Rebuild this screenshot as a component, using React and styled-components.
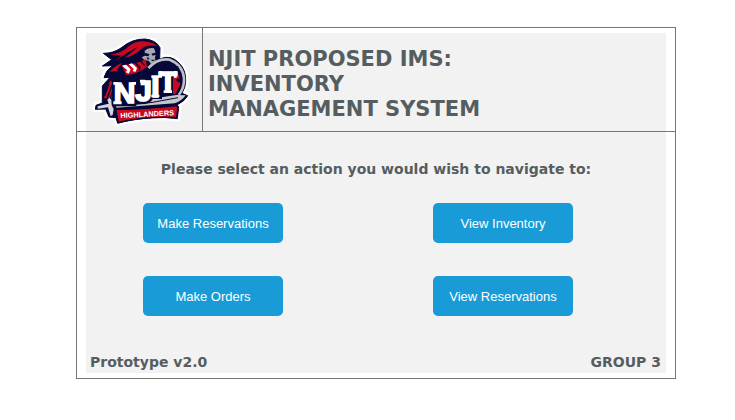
import React from "react";
import styled, { createGlobalStyle } from "styled-components";

const GlobalStyle = createGlobalStyle`
  *, *::before, *::after { box-sizing: border-box; }
  body {
    margin: 0;
    background: #fff;
    color: #555d61;
    font-family: Verdana, "DejaVu Sans", sans-serif;
  }
`;

const Page = styled.main`
  padding: 27px 59px 41px 76px;
`;

const Frame = styled.div`
  border: 1px solid #767676;
`;

const Header = styled.header`
  display: flex;
  border-bottom: 1px solid #767676;
`;

const LogoCell = styled.div`
  flex: none;
  display: flex;
  width: 126px;
  padding: 5px 0 0 9px;
  border-right: 1px solid #767676;
  background: #f2f2f2 content-box;
`;

const Logo = styled.svg`
  display: block;
  width: 100px;
  height: 90px;
  margin: 5px 6px 3px;
`;

const TitleCell = styled.div`
  flex: 1;
  display: flex;
  padding: 5px 9px 0 0;
  background: #f2f2f2 content-box;
`;

const Title = styled.h1`
  align-self: center;
  max-width: 290px;
  margin: 0;
  padding: 4px 0 0 5px;
  font-size: 21px;
  line-height: 25px;
  font-weight: 700;
`;

const Body = styled.section`
  padding: 0 9px 5px;
  background: #f2f2f2 content-box;
`;

const Prompt = styled.p`
  margin: 0;
  padding: 28px 0 25px;
  font-size: 14px;
  line-height: 18px;
  font-weight: 700;
  text-align: center;
`;

const Actions = styled.nav`
  display: grid;
  grid-template-columns: repeat(2, 140px);
  justify-content: space-between;
  row-gap: 33px;
  padding: 0 93px 0 57px;
`;

const ActionButton = styled.button`
  height: 40px;
  padding: 0;
  border: 0;
  border-radius: 5px;
  background: #189bd7;
  color: #fff;
  font-family: "Liberation Sans", Arial, sans-serif;
  font-size: 13px;
  cursor: pointer;
`;

const Footer = styled.footer`
  display: flex;
  justify-content: space-between;
  padding: 37px 5px 2px 4px;
  font-size: 14px;
  line-height: 18px;
  font-weight: 700;
`;

const LogoLetters = styled.text`
  font-family: "Liberation Sans", Arial, sans-serif;
  font-size: 90px;
  font-weight: 700;
  fill: #fff;
  stroke: #fff;
  stroke-width: 5px;
`;

const BannerText = styled.text`
  font-family: "Liberation Sans", Arial, sans-serif;
  font-size: 22px;
  font-weight: 700;
  fill: #fff;
`;

const silhouette =
  "M82 82 Q112 82 135 66 Q168 38 207 39 Q240 42 252 65 L251 99 Q284 84 309 111 Q330 131 329 164 Q329 184 318 202 L335 209 Q328 224 303 237 L308 242 L304 278 Q265 272 230 275 Q170 279 125 292 L120 275 L99 273 L89 249 L58 250 L60 238 L79 231 L79 180 L102 154 L84 155 Q88 134 110 119 L79 120 L107 101 Z";

const letters = [
  ["N", 113, 232],
  ["J", 178, 225],
  ["I", 226, 212],
  ["T", 248, 199],
];

function HighlandersLogo() {
  return (
    <Logo viewBox="48 36 300 270" role="img" aria-label="NJIT Highlanders">
      <path d={silhouette} fill="#fff" stroke="#fff" strokeWidth="17" strokeLinejoin="round" />
      <path d={silhouette} fill="#050838" stroke="#050838" strokeWidth="3" strokeLinejoin="round" />
      {/* hair and hood */}
      <path d="M102 86 Q139 82 158 61 Q182 42 213 47 Q236 51 244 61 Q211 53 195 70 Q179 88 145 96 Q174 74 186 62 Q158 77 143 87 Q125 99 114 108 L135 89 Z" fill="#c70a20" />
      <path d="M101 137 Q112 122 139 110 Q127 123 122 135 Z" fill="#c70a20" />
      {/* face */}
      <path d="M206 74 Q216 64 234 67 L240 83 L237 94 L238 104 L225 114 L218 104 L205 102 L197 94 L207 89 Z" fill="#a9a9b0" />
      <path d="M206 80 L221 85 L217 91 L207 89 Z M226 83 L242 79 L240 86 L230 89 Z M224 101 L238 101 L230 106 Z M211 94 L221 96 L216 102 Z" fill="#050838" />
      {/* sash */}
      <path d="M137 117 Q170 119 209 100 L213 122 Q183 145 150 147 Z" fill="#c70a20" />
      <path d="M138 119 L150 116 L164 130 L158 143 L149 138 L154 133 Z M158 115 L168 112 L183 126 L179 137 L170 136 L173 129 Z" fill="#fff" />
      <path d="M178 110 L192 126 L189 134 M193 104 L206 119" fill="none" stroke="#050838" strokeWidth="4" />
      {/* shield */}
      <path d="M217 126 Q246 95 281 101 Q320 116 324 157 Q325 187 308 207" fill="none" stroke="#bfc0c4" strokeWidth="8" />
      <path d="M294 124 Q315 148 312 176 L299 204 L281 203 Z" fill="#c70a20" />
      <path d="M311 155 L299 162 L311 171" fill="#050838" />
      {/* cape */}
      <path d="M104 163 Q117 177 117 205 L111 216 L83 217 Q91 182 104 163 Z" fill="#c70a20" />
      <path d="M98 175 L85 211 M108 177 L94 216 M112 191 L103 216" stroke="#050838" strokeWidth="4" />
      {/* sword */}
      <path d="M116 235 L301 207 L329 208 Q317 225 296 232 L122 245 Z" fill="#c6c7cc" />
      <path d="M145 238 Q231 232 306 215" fill="none" stroke="#050838" strokeWidth="3" />
      {/* backing of the wordmark */}
      <path d="M108 154 H146 L151 158 V151 H179 V145 H220 V133 H242 V121 H307 V149 H291 V206 H258 V219 H230 Q224 236 190 235 H181 V241 H108 Z" fill="#050838" />
      <path d="M65 241 L98 233 L94 221 L100 215 L106 221 L107 238 L113 249 L110 267 L104 270 L96 244 L65 248 Z" fill="#d5d5d9" />
      {/* wordmark */}
      {letters.map(([letter, x, y]) => (
        <LogoLetters key={letter} x={x} y={y}>
          {letter}
        </LogoLetters>
      ))}
      <path d="M112 168 H124 V176 H112 Z M112 226 H137 V235 H112 Z M168 168 H180 V176 H168 Z M192 161 H208 V170 H192 Z M226 148 H250 V156 H226 Z M226 206 H250 V214 H226 Z M250 135 H258 V155 H250 Z M294 135 H302 V155 H294 Z M263 193 H288 V201 H263 Z" fill="#fff" />
      {/* ribbon */}
      <path d="M119 250 Q210 250 302 239 L306 244 L302 275 Q212 270 127 289 Z" fill="#c70a20" stroke="#050838" strokeWidth="4" />
      <g transform="rotate(-3 215 265)">
        <BannerText x="133" y="272">HIGHLANDERS</BannerText>
      </g>
    </Logo>
  );
}

const actions = ["Make Reservations", "View Inventory", "Make Orders", "View Reservations"];

export default function App() {
  return (
    <>
      <GlobalStyle />
      <Page>
        <Frame>
          <Header>
            <LogoCell>
              <HighlandersLogo />
            </LogoCell>
            <TitleCell>
              <Title>NJIT PROPOSED IMS: INVENTORY MANAGEMENT SYSTEM</Title>
            </TitleCell>
          </Header>
          <Body>
            <Prompt>Please select an action you would wish to navigate to:</Prompt>
            <Actions aria-label="Actions">
              {actions.map((label) => (
                <ActionButton key={label} type="button">{label}</ActionButton>
              ))}
            </Actions>
            <Footer>
              <span>Prototype v2.0</span>
              <span>GROUP 3</span>
            </Footer>
          </Body>
        </Frame>
      </Page>
    </>
  );
}
